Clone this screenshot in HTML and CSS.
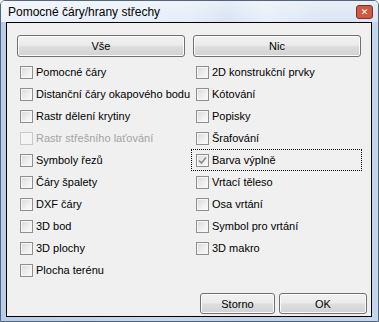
FILE: index.html
```html
<!DOCTYPE html>
<html lang="cs">

<head>
    <meta charset="UTF-8">
    <meta name="viewport" content="width=device-width, initial-scale=1.0">
    <title>Pomocné čáry/hrany střechy</title>
    <link rel="stylesheet" href="styles.css">
</head>

<body>
    <div class="window">
        <div class="titlebar">
            <span class="title">Pomocné čáry/hrany střechy</span>
            <span class="close-btn">&#x2715;</span>
        </div>
        <div class="client">
            <div class="top-buttons">
                <button class="btn">Vše</button>
                <button class="btn">Nic</button>
            </div>
            <div class="options">
                <div class="col">
                    <label class="opt"><span class="box"></span>Pomocné čáry</label>
                    <label class="opt"><span class="box"></span>Distanční čáry okapového bodu</label>
                    <label class="opt"><span class="box"></span>Rastr dělení krytiny</label>
                    <label class="opt disabled"><span class="box"></span>Rastr střešního laťování</label>
                    <label class="opt"><span class="box"></span>Symboly řezů</label>
                    <label class="opt"><span class="box"></span>Čáry špalety</label>
                    <label class="opt"><span class="box"></span>DXF čáry</label>
                    <label class="opt"><span class="box"></span>3D bod</label>
                    <label class="opt"><span class="box"></span>3D plochy</label>
                    <label class="opt"><span class="box"></span>Plocha terénu</label>
                </div>
                <div class="col">
                    <label class="opt"><span class="box"></span>2D konstrukční prvky</label>
                    <label class="opt"><span class="box"></span>Kótování</label>
                    <label class="opt"><span class="box"></span>Popisky</label>
                    <label class="opt"><span class="box"></span>Šrafování</label>
                    <label class="opt focused">
                        <span class="box">
                            <svg width="11" height="11" viewBox="0 0 11 11">
                                <path d="M2 5.5 L4.5 8 L9 2.5" fill="none" stroke="#8a8a8a" stroke-width="1.6" />
                            </svg>
                        </span>Barva výplně
                    </label>
                    <label class="opt"><span class="box"></span>Vrtací těleso</label>
                    <label class="opt"><span class="box"></span>Osa vrtání</label>
                    <label class="opt"><span class="box"></span>Symbol pro vrtání</label>
                    <label class="opt"><span class="box"></span>3D makro</label>
                </div>
            </div>
            <div class="footer">
                <button class="btn btn-storno">Storno</button>
                <button class="btn btn-ok">OK</button>
            </div>
        </div>
    </div>
</body>

</html>
```

FILE: styles.css
```css
body {
    margin: 0;
    font-family: "Liberation Sans", Arial, sans-serif;
    font-size: 11px;
    color: #000;
}

.window {
    width: 379px;
    height: 322px;
    box-sizing: border-box;
    border: 1px solid #52657c;
    border-radius: 5px 5px 0 0;
    background: linear-gradient(to right, #b7cce6, #c6d8ee 40%, #bdd1ea 70%, #c3d6ec);
    display: flex;
    flex-direction: column;
    overflow: hidden;
}

.titlebar {
    height: 21px;
    flex-shrink: 0;
    display: flex;
    align-items: center;
    justify-content: space-between;
    padding: 0 5px 0 7px;
    background:
        linear-gradient(to right, rgba(255, 255, 255, 0.6), rgba(255, 255, 255, 0.45) 50%, rgba(255, 255, 255, 0.15) 60%, rgba(255, 255, 255, 0.5) 70%, rgba(255, 255, 255, 0.2) 85%),
        linear-gradient(to bottom, #e2ebf6, #d0def1);
}

.title {
    font-size: 12px;
    color: #000;
    padding-top: 1px;
}

.close-btn {
    width: 17px;
    height: 14px;
    box-sizing: border-box;
    flex-shrink: 0;
    border: 1px solid #7a3326;
    border-radius: 3px;
    background: #cf5a42;
    color: #fff;
    font-family: "DejaVu Sans", sans-serif;
    font-size: 9px;
    font-weight: bold;
    line-height: 12px;
    text-align: center;
    margin-top: 1px;
}

.client {
    margin: 0 6px 4px 5px;
    height: 295px;
    box-sizing: border-box;
    border: 1px solid #000;
    background: #f0f0f0;
    padding: 12px 10px 2px;
    display: flex;
    flex-direction: column;
}

.top-buttons {
    display: grid;
    grid-template-columns: 168px 168px;
    gap: 8px;
}

.btn {
    height: 22px;
    box-sizing: border-box;
    border: 1px solid #707070;
    border-radius: 3px;
    background: linear-gradient(to bottom, #f2f2f2, #ebebeb 45%, #dddddd 55%, #d2d2d2);
    box-shadow: inset 0 0 0 1px #fbfbfb;
    font-family: "Liberation Sans", Arial, sans-serif;
    font-size: 11px;
    color: #000;
    padding: 0;
}

.options {
    display: grid;
    grid-template-columns: 168px 168px;
    gap: 8px;
    margin-top: 4px;
}

.opt {
    height: 22px;
    display: flex;
    align-items: center;
    gap: 3px;
    padding-left: 3px;
    white-space: nowrap;
}

.box {
    width: 13px;
    height: 13px;
    box-sizing: border-box;
    flex-shrink: 0;
    border: 1px solid #8e8f8f;
    box-shadow: inset 0 0 0 1px #f6f6f6;
    background: linear-gradient(135deg, #d6d9dd, #f4f4f4 70%, #fafafa);
    display: flex;
    align-items: center;
    justify-content: center;
}

.disabled {
    color: #a3a3a3;
}

.disabled .box {
    border-color: #c8c8c8;
    background: #f4f4f4;
}

.focused {
    outline: 1px dotted #000;
    outline-offset: -1px;
    margin-left: -2px;
    padding-left: 5px;
    margin-right: -1px;
}

.footer {
    margin-top: auto;
    margin-right: -6px;
    display: flex;
    justify-content: flex-end;
    gap: 4px;
}

.footer .btn {
    height: 21px;
}

.btn-storno {
    width: 75px;
}

.btn-ok {
    width: 88px;
}
```
